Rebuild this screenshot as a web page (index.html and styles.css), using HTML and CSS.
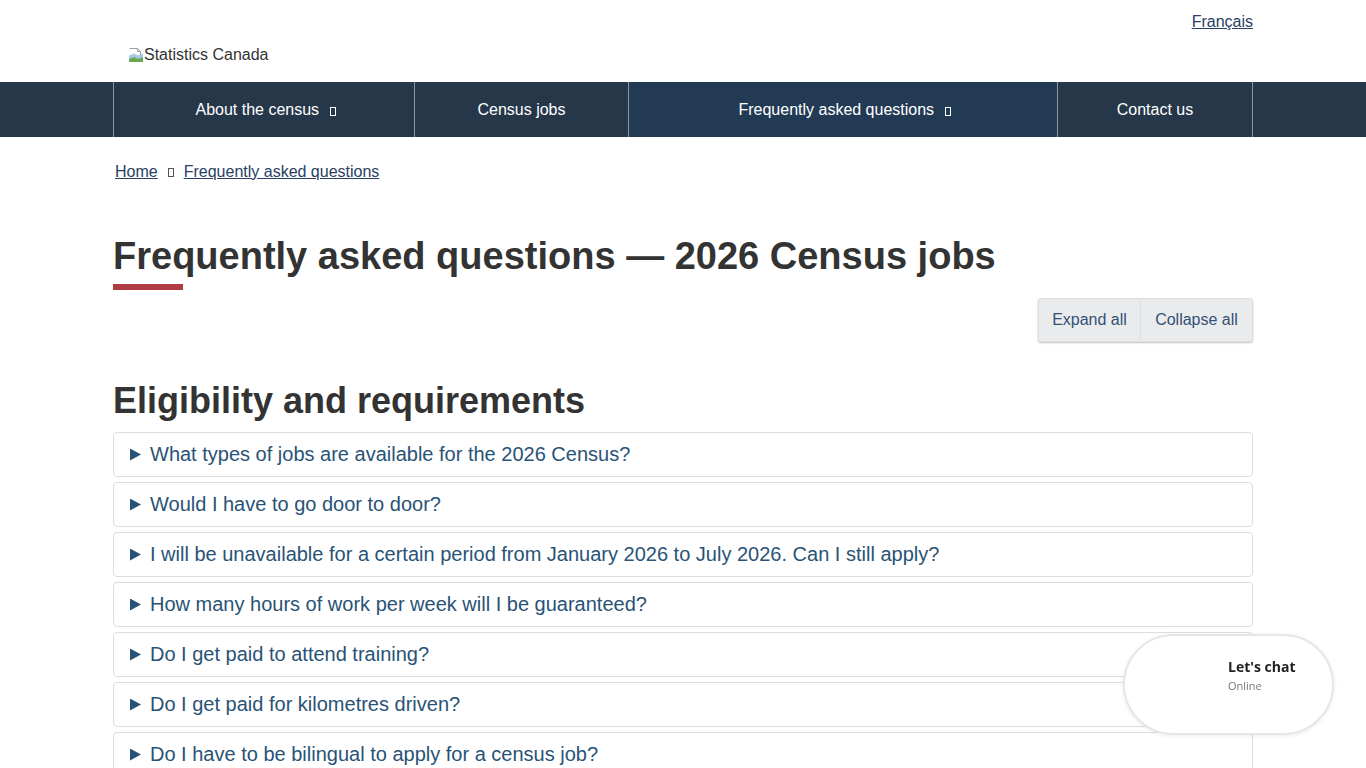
FILE: index.html
```html
<!DOCTYPE html>
<html lang="en">
<head>
<meta charset="utf-8">
<title>Frequently asked questions — 2026 Census jobs</title>
<link rel="stylesheet" href="styles.css">
</head>
<body>
<header class="site-header">
  <div class="container">
    <div class="lang-row"><a href="#" class="lang-link">Français</a></div>
    <div class="brand">
      <span class="broken-img"><svg width="16" height="16" viewBox="0 0 16 16"><path d="M1.5 1.5h8l3 3v4" fill="#fff" stroke="#9aa0a6" stroke-width="1"/><path d="M9.5 1.5v3h3" fill="none" stroke="#9aa0a6" stroke-width="1"/><path d="M1 8.5l5-2 4 2 5-2V15H1z" fill="#a8c8e8"/><path d="M1 12l5-2 4 2 5-2V15H1z" fill="#6aa84f"/></svg></span><span class="brand-text">Statistics Canada</span>
    </div>
  </div>
</header>
<nav class="main-nav">
  <div class="container">
    <ul class="nav-list">
      <li class="nav-item w1"><a href="#">About the census <span class="tofu"></span></a></li>
      <li class="nav-item w2"><a href="#">Census jobs</a></li>
      <li class="nav-item w3 active"><a href="#">Frequently asked questions <span class="tofu"></span></a></li>
      <li class="nav-item w4"><a href="#">Contact us</a></li>
    </ul>
  </div>
</nav>
<main class="container">
  <ol class="breadcrumb">
    <li><a href="#">Home</a></li>
    <li class="sep"><span class="tofu dark"></span></li>
    <li><a href="#">Frequently asked questions</a></li>
  </ol>
  <h1 class="page-title">Frequently asked questions — 2026 Census jobs</h1>
  <div class="toggle-row">
    <div class="btn-group">
      <button class="btn">Expand all</button><button class="btn">Collapse all</button>
    </div>
  </div>
  <h2 class="section-title">Eligibility and requirements</h2>
  <div class="faq-list">
    <details class="faq"><summary>What types of jobs are available for the 2026 Census?</summary></details>
    <details class="faq"><summary>Would I have to go door to door?</summary></details>
    <details class="faq"><summary>I will be unavailable for a certain period from January 2026 to July 2026. Can I still apply?</summary></details>
    <details class="faq"><summary>How many hours of work per week will I be guaranteed?</summary></details>
    <details class="faq"><summary>Do I get paid to attend training?</summary></details>
    <details class="faq"><summary>Do I get paid for kilometres driven?</summary></details>
    <details class="faq"><summary>Do I have to be bilingual to apply for a census job?</summary></details>
  </div>
</main>
<div class="chat-widget">
  <div class="chat-title">Let's chat</div>
  <div class="chat-status">Online</div>
</div>
</body>
</html>
```
FILE: styles.css
```css
* { box-sizing: border-box; }
html, body { margin: 0; padding: 0; }
body {
  font-family: "Liberation Sans", Arial, sans-serif;
  font-size: 16px;
  color: #333;
  background: #fff;
  overflow: hidden;
}
a { color: #284162; }
.container {
  width: 1170px;
  margin: 0 auto;
  padding: 0 15px;
}
.site-header { height: 82px; }
.lang-row {
  display: flex;
  justify-content: flex-end;
  padding-top: 13px;
  height: 46px;
}
.lang-link { color: #284162; line-height: 18px; }
.brand {
  display: flex;
  align-items: flex-end;
  padding-left: 15px;
  line-height: 18px;
}
.broken-img { width: 16px; height: 16px; display: inline-block; margin-bottom: 1px; }
.broken-img svg { display: block; }
.brand-text { color: #333; }

.main-nav { background: #26374a; height: 55px; }
.nav-list {
  list-style: none;
  margin: 0;
  padding: 0;
  display: flex;
  height: 55px;
  border-left: 1px solid #8a96a3;
}
.nav-item {
  border-right: 1px solid #8a96a3;
  display: flex;
  align-items: center;
  justify-content: center;
}
.nav-item a { color: #fff; text-decoration: none; line-height: 20px; }
.nav-item.active { background: #233a55; }
.w1 { width: 301px; padding-left: 3px; }
.w2 { width: 214px; }
.w3 { width: 429px; padding-left: 3px; }
.w4 { width: 195px; }
.tofu {
  display: inline-block;
  width: 6px;
  height: 9px;
  border: 1px solid #fff;
  margin-left: 6px;
  vertical-align: -1px;
}
.tofu.dark { border-color: #555; margin: 0; }

.breadcrumb {
  list-style: none;
  margin: 0;
  padding: 23px 0 0 2px;
  display: flex;
  align-items: center;
  gap: 10px;
  height: 46px;
  line-height: 18px;
}
.breadcrumb .sep { display: flex; align-items: center; padding-top: 2px; }

.page-title {
  font-size: 38px;
  font-weight: 700;
  margin: 52px 0 0 0;
  padding-bottom: 10px;
  line-height: 42px;
  color: #333;
}
.page-title::after {
  content: "";
  display: block;
  width: 70px;
  height: 6px;
  background: #af3c43;
  margin-top: 7px;
}
.toggle-row { display: flex; justify-content: flex-end; margin-top: -2px; }
.btn-group { display: flex; box-shadow: 0 1px 2px rgba(0,0,0,0.25); border-radius: 3px; }
.btn {
  font-family: "Liberation Sans", Arial, sans-serif;
  font-size: 16px;
  color: #335075;
  background: #eaebed;
  border: 1px solid #dcdee1;
  height: 44px;
  padding: 0 13px;
  line-height: 20px;
  margin: 0;
  white-space: nowrap;
}
.btn:first-child { border-radius: 3px 0 0 3px; width: 103px; }
.btn:last-child { border-radius: 0 3px 3px 0; border-left: none; width: 112px; }

.section-title {
  font-size: 36px;
  font-weight: 700;
  margin: 39px 0 0 0;
  line-height: 40px;
  color: #333;
}
.faq-list { margin-top: 11px; display: flex; flex-direction: column; gap: 5px; }
.faq {
  border: 1px solid #dddddd;
  border-radius: 4px;
  height: 45px;
}
.faq summary {
  list-style: none;
  font-size: 20px;
  color: #295376;
  padding: 7px 15px 7px 16px;
  line-height: 29px;
  display: flex;
  align-items: center;
  cursor: pointer;
}
.faq summary::-webkit-details-marker { display: none; }
.faq summary::before {
  content: "";
  display: block;
  flex: none;
  width: 11px;
  height: 12px;
  background: #295376;
  clip-path: polygon(0 0, 100% 50%, 0 100%);
  margin-right: 9px;
}

.chat-widget {
  position: fixed;
  left: 1123px;
  top: 634px;
  width: 211px;
  height: 101px;
  background: #fff;
  border: 2px solid #e6e6e6;
  border-radius: 51px;
  box-shadow: 0 1px 4px rgba(0,0,0,0.08);
  padding: 21px 0 0 103px;
  font-family: "Open Sans", sans-serif;
}
.chat-title { font-weight: 700; font-size: 14px; color: #222; line-height: 20px; }
.chat-status { font-size: 11px; color: #777; line-height: 16px; margin-top: 1px; }
```
